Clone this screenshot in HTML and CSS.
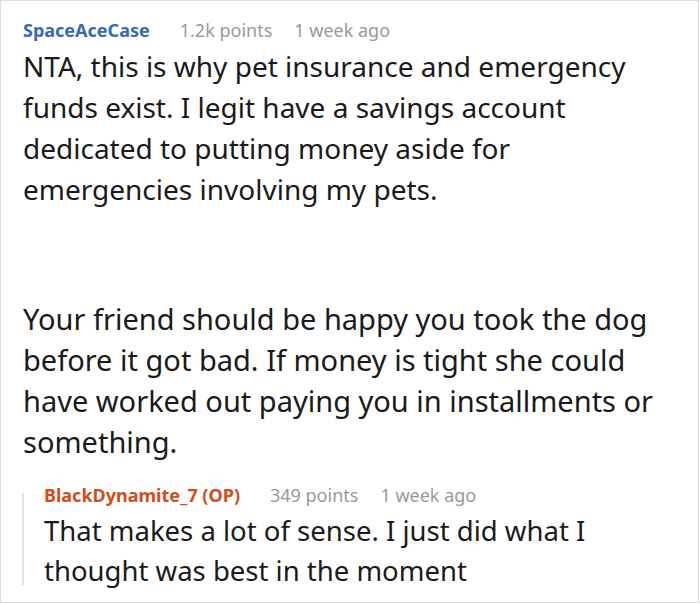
FILE: index.html
```html
<!DOCTYPE html>
<html>
<head>
<meta charset="utf-8">
<link rel="stylesheet" href="styles.css">
</head>
<body>
<div class="card">
  <div class="meta">
    <span class="author">SpaceAceCase</span>
    <span class="info">1.2k points</span>
    <span class="info">1 week ago</span>
  </div>
  <p class="text first">NTA, this is why pet insurance and emergency funds exist. I legit have a savings account dedicated to putting money aside for emergencies involving my pets.</p>
  <p class="text second">Your friend should be happy you took the dog before it got bad. If money is tight she could have worked out paying you in installments or something.</p>
  <div class="reply">
    <div class="reply-bar"></div>
    <div class="reply-body">
      <div class="meta">
        <span class="author op">BlackDynamite_7 (OP)</span>
        <span class="info">349 points</span>
        <span class="info">1 week ago</span>
      </div>
      <p class="text reply-text">That makes a lot of sense. I just did what I thought was best in the moment</p>
    </div>
  </div>
</div>
</body>
</html>
```

FILE: styles.css
```css
html, body {
  margin: 0;
  padding: 0;
  background: #ffffff;
}
.card {
  box-sizing: border-box;
  width: 699px;
  height: 603px;
  border: 1px solid #dcdcdc;
  padding: 17px 38px 0 22px;
  font-family: "Noto Sans", "Open Sans", sans-serif;
  color: #1a1a1a;
  overflow: hidden;
}
.meta {
  display: flex;
  gap: 22px;
  font-size: 18px;
  line-height: 24px;
}
.author {
  font-weight: 700;
  color: #3769b4;
  margin-right: 8px;
}
.author.op {
  color: #d24c1c;
}
.info {
  color: #9a9a9a;
}
.text {
  margin: 0;
  line-height: 41px;
}
.first {
  margin-top: 4px;
  font-size: 28px;
}
.second {
  margin-top: 88px;
  font-size: 29px;
}
.reply {
  display: flex;
  margin-top: 21px;
  margin-left: -1px;
}
.reply-bar {
  flex: 0 0 2px;
  background: #e2e2e2;
  margin-top: 10px;
  margin-bottom: 6px;
}
.reply-body {
  flex: 1;
  padding-left: 20px;
}
.reply-text {
  margin-top: 4px;
  font-size: 27.5px;
  line-height: 40px;
}
```
